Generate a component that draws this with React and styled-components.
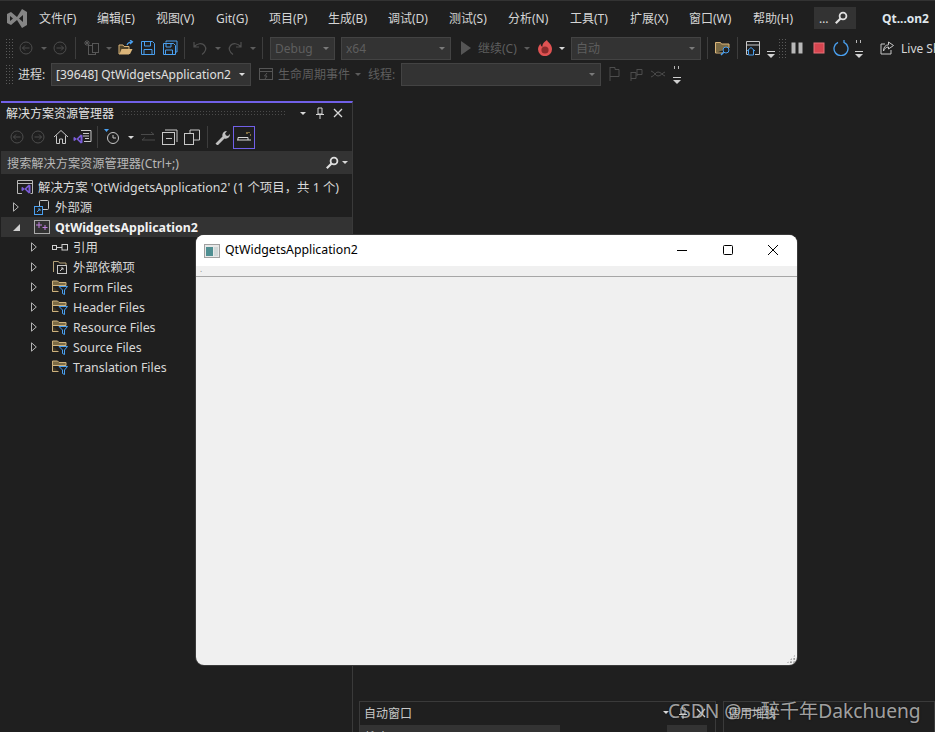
import React from 'react'
import styled, { createGlobalStyle } from 'styled-components'

const GlobalStyle = createGlobalStyle`
  html, body { margin: 0; padding: 0; background: #1f1f1f; }
  body { font-family: "Noto Sans", "Noto Sans CJK SC", sans-serif; }
`

const Page = styled.div`
  width: 935px;
  height: 732px;
  position: relative;
  overflow: hidden;
  background: #1f1f1f;
  color: #dcdcdc;
  display: flex;
  flex-direction: column;
  font-size: 12px;
`

const MenuBar = styled.div`
  height: 35px;
  flex: none;
  display: flex;
  align-items: center;
  border-top: 1px solid #333;
  box-sizing: border-box;
  position: relative;
`
const LogoSlot = styled.div`
  width: 39px;
  display: flex;
  justify-content: center;
  padding-right: 5px;
  box-sizing: border-box;
`
const MenuItem = styled.span`
  width: ${p => p.$w}px;
  flex: none;
  white-space: nowrap;
  font-size: 12px;
  color: #d6d6d6;
`
const SearchBox = styled.div`
  width: 42px;
  height: 22px;
  flex: none;
  background: #333;
  display: flex;
  align-items: center;
  justify-content: space-between;
  padding: 0 8px 0 5px;
  box-sizing: border-box;
  color: #ddd;
`
const ProjectName = styled.span`
  margin-left: 26px;
  font-weight: 700;
  font-size: 12px;
  color: #dfe6ec;
  white-space: nowrap;
`

const ToolRow = styled.div`
  height: 26px;
  flex: none;
  display: flex;
  align-items: center;
  padding-left: 5px;
  white-space: nowrap;
`
const Slot = styled.span`
  flex: none;
  width: ${p => p.$w}px;
  margin-left: ${p => p.$ml || 0}px;
  display: flex;
  align-items: center;
  justify-content: center;
`
const Sep = styled.span`
  flex: none;
  width: 1px;
  height: 22px;
  margin-left: ${p => p.$ml}px;
  background: #3d3d3d;
`
const Grip = styled.span`
  flex: none;
  width: 8px;
  height: 20px;
  margin-left: ${p => p.$ml || 0}px;
  background-image: radial-gradient(#5a5a5a 0.6px, transparent 0.8px);
  background-size: 3px 3px;
`
const Caret = styled.span`
  flex: none;
  width: 8px;
  margin-left: ${p => p.$ml || 0}px;
  display: flex;
  justify-content: center;
  &::after {
    content: '';
    border-left: 3.5px solid transparent;
    border-right: 3.5px solid transparent;
    border-top: 3.5px solid ${p => (p.$dim ? '#5c5c5c' : '#d8d8d8')};
  }
`
const Combo = styled.div`
  flex: none;
  width: ${p => p.$w}px;
  height: 23px;
  margin-left: ${p => p.$ml}px;
  box-sizing: border-box;
  background: #333;
  border: 1px solid #434343;
  display: flex;
  align-items: center;
  padding: 0 5px 0 4px;
  font-size: 12px;
  color: ${p => (p.$active ? '#e0e0e0' : '#5e5e5e')};
  &::after {
    content: '';
    margin-left: auto;
    border-left: 3.5px solid transparent;
    border-right: 3.5px solid transparent;
    border-top: 3.5px solid ${p => (p.$active ? '#dcdcdc' : '#7a7a7a')};
  }
`
const ToolText = styled.span`
  flex: none;
  width: ${p => p.$w}px;
  margin-left: ${p => p.$ml}px;
  font-size: 12px;
  color: ${p => (p.$dim ? '#5e5e5e' : '#d6d6d6')};
`
const Overflow = styled.span`
  flex: none;
  width: 8px;
  display: flex;
  flex-direction: column;
  align-items: center;
  gap: 7px;
  margin-top: 2px;
`
const DropMark = styled.span`
  flex: none;
  width: 8px;
  margin-left: ${p => p.$ml}px;
  margin-top: 12px;
  display: flex;
`

const Dock = styled.div`
  flex: 1;
  min-height: 0;
  display: flex;
  margin-top: 14px;
`
const ExplorerPanel = styled.div`
  width: 352px;
  flex: none;
  margin-left: 1px;
  box-sizing: border-box;
  border-right: 1px solid #3a3a3a;
  border-top: 2px solid #7160e8;
  display: flex;
  flex-direction: column;
`
const PanelTitle = styled.div`
  height: 20px;
  flex: none;
  display: flex;
  align-items: center;
  padding: 0 9px 0 5px;
  font-size: 12px;
  color: #e2e2e2;
`
const TitleGrip = styled.span`
  flex: 1;
  height: 6px;
  margin: 0 14px 0 7px;
  background-image: radial-gradient(#4a4a4a 0.6px, transparent 0.8px);
  background-size: 3px 3px;
`
const TitleActions = styled.span`
  display: flex;
  align-items: center;
  gap: 8px;
`
const PanelTools = styled.div`
  height: 28px;
  flex: none;
  display: flex;
  align-items: center;
  padding-left: 9px;
`
const ActiveTool = styled.span`
  flex: none;
  width: 22px;
  height: 23px;
  margin-left: 3px;
  box-sizing: border-box;
  border: 1px solid #7160e8;
  display: flex;
  align-items: center;
  justify-content: center;
`
const SearchBar = styled.div`
  height: 23px;
  flex: none;
  background: #333;
  display: flex;
  align-items: center;
  padding: 0 3px 0 6px;
  font-size: 12.2px;
  color: #b8b8b8;
  gap: 2px;
`
const SearchHint = styled.span`
  flex: 1;
`
const Tree = styled.div`
  display: flex;
  flex-direction: column;
  padding-top: 3px;
`
const TreeRow = styled.div`
  height: 20px;
  display: flex;
  align-items: center;
  padding-left: ${p => p.$indent}px;
  background: ${p => (p.$selected ? '#333' : 'transparent')};
  font-size: 12.4px;
  font-weight: ${p => (p.$selected ? 700 : 400)};
  color: ${p => (p.$selected ? '#f2f2f2' : '#d8d8d8')};
  white-space: nowrap;
  gap: 5px;
`
const Arrow = styled.span`
  flex: none;
  width: 16px;
  margin-right: 5px;
  display: flex;
  justify-content: center;
  visibility: ${p => (p.$none ? 'hidden' : 'visible')};
`

const RightArea = styled.div`
  flex: 1;
  display: flex;
  align-items: flex-end;
  padding-left: 6px;
  gap: 7px;
`
const BottomPanel = styled.div`
  width: ${p => p.$w}px;
  flex: none;
  height: 31px;
  box-sizing: border-box;
  border: 1px solid #3a3a3a;
  border-bottom: 0;
  overflow: hidden;
`
const BottomTitle = styled.div`
  height: 23px;
  display: flex;
  align-items: center;
  padding: 0 9px 2px 4px;
  box-sizing: border-box;
  font-size: 12px;
  color: #c8c8c8;
  justify-content: space-between;
`
const BottomContent = styled.div`
  height: 8px;
  display: flex;
  justify-content: space-between;
`
const BottomField = styled.div`
  width: ${p => p.$w}px;
  margin-right: ${p => p.$mr || 0}px;
  background: #333;
  height: 8px;
  overflow: hidden;
  padding-left: 5px;
  box-sizing: border-box;
  font-size: 12px;
  line-height: 25px;
  color: #c8c8c8;
`

const AppWindow = styled.div`
  position: absolute;
  left: 196px;
  top: 235px;
  width: 601px;
  height: 430px;
  border-radius: 8px;
  overflow: hidden;
  background: #f0f0f0;
  box-shadow: 0 0 0 1px #3a3a3a;
  display: flex;
  flex-direction: column;
  color: #000;
`
const WindowTitle = styled.div`
  height: 31px;
  flex: none;
  background: #fff;
  display: flex;
  align-items: center;
  padding-left: 8px;
  padding-right: 1px;
  font-size: 12.3px;
  gap: 5px;
`
const WindowName = styled.span`
  flex: 1;
  margin-bottom: 2px;
`
const WindowButtons = styled.span`
  display: flex;
  margin-bottom: 2px;
`
const WindowButton = styled.span`
  width: 45.5px;
  height: 29px;
  display: flex;
  align-items: center;
  justify-content: center;
`
const WindowTools = styled.div`
  height: 11px;
  flex: none;
  box-sizing: border-box;
  border-bottom: 1px solid #a6a6a6;
  padding-left: 4px;
  font-size: 8px;
  line-height: 5px;
  color: #888;
`
const WindowBody = styled.div`
  flex: 1;
  position: relative;
`
const ResizeGrip = styled.span`
  position: absolute;
  right: 1px;
  bottom: 1px;
  width: 10px;
  height: 10px;
  background-image: radial-gradient(#949494 1px, transparent 1.2px);
  background-size: 3.300px 3.300px;
  clip-path: polygon(100% 0, 100% 100%, 0 100%);
`
const Watermark = styled.div`
  position: absolute;
  left: 668px;
  top: 697px;
  font-size: 19.2px;
  line-height: 28px;
  color: rgba(255, 255, 255, 0.62);
  white-space: nowrap;
  text-shadow: 0 0 2px rgba(0, 0, 0, 0.7);
`

const Svg = ({ size = 16, h, children, ...rest }) => (
  <svg width={size} height={h || size} viewBox={`0 0 ${size} ${h || size}`} fill="none" {...rest}>{children}</svg>
)

const VsLogo = () => (
  <Svg size={20} h={19}>
    <path d="M0 5l4-2 6 5 5-8 5 3v13l-5 3-5-8-6 5-4-2zM3 7v5l3-2.500zM16 6l-4 3.500 4 3.500z" fill="#858585" fillRule="evenodd" />
  </Svg>
)
const SearchGlyph = ({ c = '#e0e0e0' }) => (
  <Svg size={14}>
    <circle cx="9" cy="5" r="3.400" stroke={c} strokeWidth="1.800" />
    <path d="M6.500 7.500L1.800 12.200" stroke={c} strokeWidth="2.200" />
  </Svg>
)
const CircleNav = ({ dir }) => (
  <Svg size={14}>
    <circle cx="7" cy="7" r="6" stroke="#4d4d4d" />
    <path d={dir < 0 ? 'M10.500 7h-7M6 4.500L3.500 7 6 9.500' : 'M3.500 7h7M8 4.500L10.500 7 8 9.500'} stroke="#4d4d4d" />
  </Svg>
)
const NewProject = () => (
  <Svg>
    <rect x="4.500" y="5.500" width="7" height="9" stroke="#575757" />
    <rect x="8.500" y="3.500" width="6" height="9" fill="#1f1f1f" stroke="#575757" />
    <path d="M3 0v6M0 3h6M1 1l4 4M5 1L1 5" stroke="#575757" />
  </Svg>
)
const OpenFolder = () => (
  <Svg>
    <path d="M1 14V5h4l1 1.500h5V14z" fill="#4f4328" stroke="#dcb67a" />
    <path d="M1.500 14l2-5h11l-2.500 5z" fill="#dcb67a" />
    <path d="M9 5c1-2.500 2.500-3.200 5-3.200M12 0l2.500 1.800L12 4" stroke="#4aa0f0" strokeWidth="1.200" />
  </Svg>
)
const SaveIcon = () => (
  <Svg>
    <path d="M1.500 1.500h11l2 2v11h-13z" stroke="#4aa0f0" />
    <path d="M4.500 2v4h6V2M4 14.500V9.500h8v5" stroke="#4aa0f0" />
  </Svg>
)
const SaveAllIcon = () => (
  <Svg>
    <path d="M4 2.500V1h11v11h-1" stroke="#4aa0f0" />
    <path d="M1.500 3.500h10l2 2v9h-12z" stroke="#4aa0f0" />
    <path d="M4 4v3h5V4M3.500 14.500V10h7v4.500" stroke="#4aa0f0" />
  </Svg>
)
const UndoIcon = ({ flip }) => (
  <Svg style={flip ? { transform: 'scaleX(-1)' } : undefined}>
    <path d="M2 2v5h5M2.500 6.500C5 3.500 10 2.500 12.500 5.500s1 6.500-2.500 9" stroke="#4f4f4f" strokeWidth="1.200" />
  </Svg>
)
const PlayIcon = () => (
  <Svg size={10} h={14}><path d="M0 0l10 7-10 7z" fill="#555" /></Svg>
)
const FireIcon = () => (
  <Svg>
    <path d="M10 0c.6 2.500 5 3.500 5 9a7 7 0 0 1-14 .3C1 6.500 2.500 5 3.500 3.500c0 1.700.6 2.800 1.800 3.300C5.300 4 7 2 10 0z" fill="#e05252" />
    <circle cx="8" cy="10" r="3.600" fill="#8c2b2b" />
  </Svg>
)
const FolderSearch = () => (
  <Svg>
    <path d="M.5 13V2.500h5l1 1.500h7.500v4" fill="#7a6a45" stroke="#dcb67a" />
    <path d="M.5 13h7.500" stroke="#dcb67a" />
    <circle cx="11" cy="10" r="3" fill="#1f1f1f" stroke="#4aa0f0" />
    <path d="M8.800 12.200L6 15" stroke="#4aa0f0" strokeWidth="1.400" />
  </Svg>
)
const WindowHome = () => (
  <Svg>
    <path d="M3 14.500H1.500v-13h13v13H10M1.500 5h13" stroke="#c8c8c8" />
    <path d="M2 11l4-3.500 4 3.500M3.500 10v5h5v-5" stroke="#4aa0f0" />
  </Svg>
)
const PauseIcon = () => (
  <Svg size={14}>
    <rect x="1.500" y="1.500" width="4" height="11" fill="#b8b8b8" />
    <rect x="8.500" y="1.500" width="4" height="11" fill="#b8b8b8" />
  </Svg>
)
const StopIcon = () => (
  <Svg size={14}>
    <rect x="2" y="2" width="10" height="10" fill="#d6454f" stroke="#e8737a" />
  </Svg>
)
const RestartIcon = () => (
  <Svg size={16}>
    <path d="M5 2.300A7 7 0 1 0 11 2.300M11 0v3" stroke="#4aa0f0" strokeWidth="1.300" />
  </Svg>
)
const ShareIcon = () => (
  <Svg size={14}>
    <path d="M5 3H1v10h10V9" stroke="#c8c8c8" />
    <path d="M8.500 1l5 3.500-5 3.500V6C6 6 4.500 7.500 3.500 10c0-4 2-6 5-6.200z" stroke="#c8c8c8" />
  </Svg>
)
const BarCaret = () => (
  <Svg size={8} h={7}><path d="M0 .5h8" stroke="#d0d0d0" /><path d="M0 3h8L4 7z" fill="#d0d0d0" /></Svg>
)
const OverflowMark = () => (
  <Overflow>
    <Svg size={8} h={4}><path d="M1.500 0v3M5.500 0v3" stroke="#b8b8b8" /></Svg>
    <BarCaret />
  </Overflow>
)
const LifecycleIcon = () => (
  <Svg>
    <rect x="1.500" y="2.500" width="13" height="11" stroke="#555" />
    <path d="M1.500 5.500h13M9 7L6.500 10H9l-2 3" stroke="#555" />
  </Svg>
)
const FlagIcon = ({ kind }) => (
  <Svg>
    {kind === 0 && <path d="M3 1v14M3 1.500h5v2h4v7H3" stroke="#4d4d4d" />}
    {kind === 1 && <path d="M2 6v9M2 6.500h5v6H2M8 3v7M8 3.500h5v5H8" stroke="#4d4d4d" />}
    {kind === 2 && <path d="M1 5c4 1 4 5 7 5s4-3 7-4M1 11c4-1 4-5 7-5s4 3 7 4" stroke="#4d4d4d" />}
  </Svg>
)
const PinIcon = () => (
  <Svg size={10} h={12}>
    <path d="M3 1h4v6H3zM1 7.500h8M5 8v4" stroke="#d8d8d8" />
  </Svg>
)
const CloseIcon = () => (
  <Svg size={10}><path d="M1 1l8 8M9 1L1 9" stroke="#d8d8d8" strokeWidth="1.300" /></Svg>
)
const HomeIcon = () => (
  <Svg>
    <path d="M1 8l7-6.500L15 8M3.500 6.500v8h3V10h3v4.500h3v-8" stroke="#c8c8c8" />
  </Svg>
)
const VsMark = ({ size = 10 }) => (
  <svg width={size} height={size} viewBox="0 0 10 10" fill="none">
    <path d="M.5 3.500l1-.5 2 1.800L7.800.5 9.500 1.300v7.400L7.800 9.500 3.500 5.200l-2 1.800-1-.5zM7.500 3L5.500 5l2 2z" fill="#7a5cd8" fillRule="evenodd" />
  </svg>
)
const SwitchView = () => (
  <Svg size={20} h={16}>
    <g transform="translate(0 5)"><VsMark /></g>
    <path d="M8 1.500h10v11h-7M10 4.500h6M10 7h6M12 9.500h4" stroke="#c8c8c8" />
  </Svg>
)
const HistoryIcon = () => (
  <Svg size={18} h={18}>
    <path d="M0 1h5L2.500 4z" fill="#4aa0f0" />
    <circle cx="9" cy="10" r="5.500" stroke="#c8c8c8" />
    <path d="M9 7v3h3" stroke="#c8c8c8" />
  </Svg>
)
const SyncIcon = () => (
  <Svg>
    <path d="M1 5.500h13M11 3l3 2.500M15 11H2M5 8.500L2 11" stroke="#4a4a4a" />
  </Svg>
)
const CollapseIcon = () => (
  <Svg>
    <rect x=".5" y="3.500" width="12" height="12" stroke="#c8c8c8" />
    <path d="M3 1h12v12M4 9.500h6" stroke="#c8c8c8" />
  </Svg>
)
const PagesIcon = () => (
  <Svg>
    <rect x=".5" y="4.500" width="9" height="11" stroke="#c8c8c8" />
    <path d="M6 4V1h9.500v10H10" stroke="#c8c8c8" />
  </Svg>
)
const WrenchIcon = () => (
  <Svg>
    <path d="M1.500 14.500l7-7c-.8-2.500 1-5.500 4.500-5.500l-2 2.500 1 2 2 .5 2-2c.2 3.500-3 5.500-5.500 4.500l-7 7z" fill="#c0c0c0" />
  </Svg>
)
const PreviewIcon = () => (
  <Svg>
    <path d="M1 11h14M2 11V8.500h10V11" stroke="#d8d8d8" />
    <path d="M10 4h2M14 6h1M13 3v1" stroke="#e8c060" />
  </Svg>
)
const SolutionIcon = () => (
  <Svg size={16}>
    <path d="M5 14.500H.5V1.500h15v13h-2M.5 4.500h15" stroke="#b8b8b8" />
    <g transform="translate(4 5)"><VsMark /></g>
  </Svg>
)
const ExternalIcon = () => (
  <Svg>
    <rect x="5.500" y="1.500" width="9" height="9" rx="1" stroke="#c8c8c8" />
    <rect x=".5" y="7.500" width="8" height="8" fill="#1f1f1f" stroke="#4aa0f0" />
    <path d="M3 13l3-3M4 10h2v2" stroke="#4aa0f0" />
  </Svg>
)
const ProjectIcon = () => (
  <Svg>
    <rect x=".5" y="1.500" width="15" height="13" stroke="#aaa" />
    <path d="M5 3v6M2 6h6M11 6v5M8.500 8.500h5" stroke="#c080e0" />
  </Svg>
)
const RefsIcon = () => (
  <Svg>
    <rect x=".5" y="6.500" width="4" height="4" stroke="#d0d0d0" />
    <rect x="10" y="5.500" width="5.500" height="5.500" stroke="#d0d0d0" />
    <path d="M5 8.500h5" stroke="#d0d0d0" />
  </Svg>
)
const DepsIcon = () => (
  <Svg>
    <path d="M1.500 13V2.500h5l1 1.500h6.500v2" stroke="#b5a279" />
    <rect x="5.500" y="6.500" width="9" height="8" fill="#1f1f1f" stroke="#c8c8c8" />
    <path d="M8 12l3-3M9 9h2v2" stroke="#c8c8c8" />
  </Svg>
)
const FilterFolder = () => (
  <Svg>
    <path d="M.5 12.500V2h5l1.500 1.500h7V6.500H.5" fill="#7a6a45" stroke="#cdb27e" />
    <path d="M.5 6.500v6h6" fill="#3a3222" stroke="#cdb27e" />
    <path d="M7 7.500h8.500L12.500 11v4.500l-2-1V11z" fill="#1f1f1f" stroke="#4aa0f0" />
  </Svg>
)
const AppGlyph = () => (
  <Svg>
    <rect x=".5" y="1.500" width="15" height="13" fill="#e8e8e8" stroke="#a0a0a0" />
    <rect x="2" y="4" width="7" height="9" fill="#4f8f92" />
    <rect x="10" y="4" width="4" height="9" fill="#d0d8d8" />
  </Svg>
)
const ClosedArrow = () => (
  <Svg size={6} h={10}><path d="M.5 .8L5.300 5 .5 9.200z" stroke="#b4b4b4" /></Svg>
)
const OpenArrow = () => (
  <Svg size={7} h={7}><path d="M7 0v7H0z" fill="#d0d0d0" /></Svg>
)
const MinGlyph = () => (<Svg size={12}><path d="M1 6.500h10" stroke="#000" /></Svg>)
const MaxGlyph = () => (<Svg size={12}><rect x="1.500" y="1.500" width="9" height="9" rx="1" stroke="#000" /></Svg>)
const XGlyph = () => (<Svg size={12}><path d="M1 1l10 10M11 1L1 11" stroke="#000" /></Svg>)

const menus = [
  ['文件(F)', 58], ['编辑(E)', 59], ['视图(V)', 60], ['Git(G)', 53], ['项目(P)', 59], ['生成(B)', 60],
  ['调试(D)', 61], ['测试(S)', 59], ['分析(N)', 62], ['工具(T)', 60], ['扩展(X)', 59], ['窗口(W)', 64], ['帮助(H)', 61],
]
const files = [
  ['Form Files'], ['Header Files'], ['Resource Files'], ['Source Files'], ['Translation Files', true],
]

export default function App() {
  return (
    <Page>
      <GlobalStyle />
      <MenuBar>
        <LogoSlot><VsLogo /></LogoSlot>
        {menus.map(([label, w]) => <MenuItem key={label} $w={w}>{label}</MenuItem>)}
        <SearchBox>…<SearchGlyph /></SearchBox>
        <ProjectName>Qt...on2</ProjectName>
      </MenuBar>

      <ToolRow>
        <Grip />
        <Slot $w={14} $ml={6}><CircleNav dir={-1} /></Slot>
        <Caret $ml={7} $dim />
        <Slot $w={14} $ml={5}><CircleNav dir={1} /></Slot>
        <Sep $ml={8} />
        <Slot $w={16} $ml={8}><NewProject /></Slot>
        <Caret $ml={5} $dim />
        <Slot $w={16} $ml={5}><OpenFolder /></Slot>
        <Slot $w={16} $ml={6}><SaveIcon /></Slot>
        <Slot $w={16} $ml={6}><SaveAllIcon /></Slot>
        <Sep $ml={6} />
        <Slot $w={16} $ml={7}><UndoIcon /></Slot>
        <Caret $ml={6} $dim />
        <Slot $w={16} $ml={5}><UndoIcon flip /></Slot>
        <Caret $ml={6} $dim />
        <Sep $ml={5} />
        <Combo $w={65} $ml={7}>Debug</Combo>
        <Combo $w={110} $ml={6}>x64</Combo>
        <Slot $w={10} $ml={10}><PlayIcon /></Slot>
        <ToolText $w={41} $ml={7} $dim>继续(C)</ToolText>
        <Caret $ml={4} $dim />
        <Slot $w={16} $ml={6}><FireIcon /></Slot>
        <Caret $ml={5} />
        <Combo $w={130} $ml={5}>自动</Combo>
        <Sep $ml={6} />
        <Slot $w={16} $ml={7}><FolderSearch /></Slot>
        <Sep $ml={6} />
        <Slot $w={16} $ml={7}><WindowHome /></Slot>
        <DropMark $ml={6}><BarCaret /></DropMark>
        <Grip $ml={3} />
        <Slot $w={14} $ml={4}><PauseIcon /></Slot>
        <Slot $w={14} $ml={8}><StopIcon /></Slot>
        <Slot $w={16} $ml={7}><RestartIcon /></Slot>
        <Slot $w={8} $ml={6}><OverflowMark /></Slot>
        <Slot $w={14} $ml={17}><ShareIcon /></Slot>
        <ToolText $w={60} $ml={7}>Live Share</ToolText>
      </ToolRow>

      <ToolRow>
        <Grip />
        <ToolText $w={27} $ml={5}>进程:</ToolText>
        <Combo $w={200} $ml={6} $active>[39648] QtWidgetsApplication2</Combo>
        <Slot $w={16} $ml={7}><LifecycleIcon /></Slot>
        <ToolText $w={72} $ml={4} $dim>生命周期事件</ToolText>
        <Caret $ml={4} $dim />
        <ToolText $w={27} $ml={6} $dim>线程:</ToolText>
        <Combo $w={200} $ml={6} />
        <Slot $w={16} $ml={6}><FlagIcon kind={0} /></Slot>
        <Slot $w={16} $ml={6}><FlagIcon kind={1} /></Slot>
        <Slot $w={16} $ml={5}><FlagIcon kind={2} /></Slot>
        <Slot $w={8} $ml={7}><OverflowMark /></Slot>
      </ToolRow>

      <Dock>
        <ExplorerPanel>
          <PanelTitle>
            解决方案资源管理器
            <TitleGrip />
            <TitleActions>
              <Caret />
              <PinIcon />
              <CloseIcon />
            </TitleActions>
          </PanelTitle>
          <PanelTools>
            <Slot $w={14}><CircleNav dir={-1} /></Slot>
            <Slot $w={14} $ml={7}><CircleNav dir={1} /></Slot>
            <Slot $w={16} $ml={8}><HomeIcon /></Slot>
            <Slot $w={20} $ml={4}><SwitchView /></Slot>
            <Sep $ml={4} />
            <Slot $w={18} $ml={6}><HistoryIcon /></Slot>
            <Caret $ml={5} />
            <Slot $w={16} $ml={5}><SyncIcon /></Slot>
            <Slot $w={16} $ml={6}><CollapseIcon /></Slot>
            <Slot $w={16} $ml={6}><PagesIcon /></Slot>
            <Sep $ml={7} />
            <Slot $w={16} $ml={6}><WrenchIcon /></Slot>
            <ActiveTool><PreviewIcon /></ActiveTool>
          </PanelTools>
          <SearchBar>
            <SearchHint>搜索解决方案资源管理器(Ctrl+;)</SearchHint>
            <SearchGlyph />
            <Caret />
          </SearchBar>
          <Tree>
            <TreeRow $indent={16}><SolutionIcon />解决方案 'QtWidgetsApplication2' (1 个项目，共 1 个)</TreeRow>
            <TreeRow $indent={7}><Arrow><ClosedArrow /></Arrow><ExternalIcon />外部源</TreeRow>
            <TreeRow $indent={7} $selected><Arrow><OpenArrow /></Arrow><ProjectIcon />QtWidgetsApplication2</TreeRow>
            <TreeRow $indent={25}><Arrow><ClosedArrow /></Arrow><RefsIcon />引用</TreeRow>
            <TreeRow $indent={25}><Arrow><ClosedArrow /></Arrow><DepsIcon />外部依赖项</TreeRow>
            {files.map(([name, none]) => (
              <TreeRow key={name} $indent={25}><Arrow $none={none}><ClosedArrow /></Arrow><FilterFolder />{name}</TreeRow>
            ))}
          </Tree>
        </ExplorerPanel>
        <RightArea>
          <BottomPanel $w={357}>
            <BottomTitle>
              自动窗口
              <TitleActions>
                <Caret />
                <PinIcon />
                <CloseIcon />
              </TitleActions>
            </BottomTitle>
            <BottomContent>
              <BottomField $w={200}>搜索(Ctrl+E)</BottomField>
              <BottomField $w={40} $mr={8} />
            </BottomContent>
          </BottomPanel>
          <BottomPanel $w={212}>
            <BottomTitle>调用堆栈</BottomTitle>
          </BottomPanel>
        </RightArea>
      </Dock>

      <AppWindow>
        <WindowTitle>
          <AppGlyph />
          <WindowName>QtWidgetsApplication2</WindowName>
          <WindowButtons>
            <WindowButton><MinGlyph /></WindowButton>
            <WindowButton><MaxGlyph /></WindowButton>
            <WindowButton><XGlyph /></WindowButton>
          </WindowButtons>
        </WindowTitle>
        <WindowTools>.</WindowTools>
        <WindowBody><ResizeGrip /></WindowBody>
      </AppWindow>

      <Watermark>CSDN @一醉千年Dakchueng</Watermark>
    </Page>
  )
}
